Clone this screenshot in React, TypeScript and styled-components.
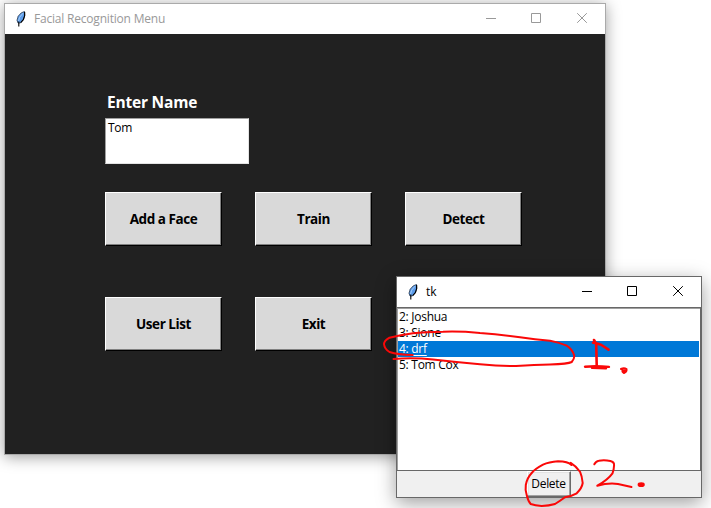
import React from "react";
import styled, { createGlobalStyle } from "styled-components";

const Global = createGlobalStyle`
  * { box-sizing: border-box; }
  html, body { margin: 0; padding: 0; background: #fff; overflow: hidden; }
`;

const Desktop = styled.main`
  position: relative;
  width: 711px;
  height: 508px;
  overflow: hidden;
  background: #fff;
  font-family: "Open Sans", "Noto Sans", sans-serif;
  font-size: 12px;
  line-height: 16px;
  color: #000;
`;

const WindowFrame = styled.section<{ $x: number; $y: number; $w: number; $h: number; $active?: boolean }>`
  position: absolute;
  left: ${(p) => p.$x}px;
  top: ${(p) => p.$y}px;
  width: ${(p) => p.$w}px;
  height: ${(p) => p.$h}px;
  display: flex;
  flex-direction: column;
  border: 1px solid ${(p) => (p.$active ? "#686868" : "#aaa")};
  box-shadow: ${(p) => (p.$active ? "0 5px 18px rgba(0,0,0,.38)" : "0 2px 14px rgba(0,0,0,.38)")};
  background: #fff;
`;

const TitleBar = styled.header<{ $active?: boolean }>`
  flex: 0 0 30px;
  display: flex;
  align-items: center;
  padding-left: 10px;
  color: ${(p) => (p.$active ? "#000" : "#999")};
`;

const Title = styled.span<{ $spacing: number }>`
  flex: 1;
  margin-left: 7px;
  letter-spacing: ${(p) => p.$spacing}px;
  white-space: nowrap;
`;

const Controls = styled.div`
  display: flex;
`;

const Control = styled.svg`
  width: 45px;
  height: 30px;
  fill: none;
  stroke: currentColor;

  &:last-child { width: 47px; }
`;

const Client = styled.div`
  flex: 1;
  display: flex;
  flex-direction: column;
  padding: 58px 0 0 100px;
  background: #212121;
`;

const FieldLabel = styled.label`
  height: 26px;
  padding-left: 2px;
  font-size: 15.5px;
  font-weight: 700;
  line-height: 20px;
  letter-spacing: -0.2px;
  color: #fff;
`;

const NameField = styled.div`
  width: 144px;
  height: 46px;
  padding: 1px 1px 1px 2px;
  border: 1px solid;
  border-color: #a0a0a0 #e3e3e3 #e3e3e3 #a0a0a0;
  background: #fff;
  letter-spacing: -0.3px;
`;

const ButtonGrid = styled.div`
  display: grid;
  grid-template-columns: repeat(3, 117px);
  grid-auto-rows: 54px;
  gap: 51px 33px;
  margin-top: 28px;
`;

const FaceButton = styled.button`
  padding: 0 0 1px;
  border: 1px solid;
  border-color: #fff #000 #000 #fff;
  box-shadow: inset -1px -1px #808080;
  background: #d9d9d9;
  font: 700 13.5px/18px "Open Sans", "Noto Sans", sans-serif;
  letter-spacing: -0.45px;
  color: #000;
`;

const ListBox = styled.ul`
  flex: 0 0 164px;
  margin: 0;
  padding: 1px 1px 0 0;
  list-style: none;
  border: 1px solid #686868;
  border-width: 1px 1px 1px 0;
  box-shadow: inset 1px 1px #a0a0a0;
  background: #fff;
`;

const ListItem = styled.li<{ $selected?: boolean }>`
  height: 16px;
  margin-left: 1px;
  padding-left: 1px;
  line-height: 16px;
  letter-spacing: -0.28px;
  color: ${(p) => (p.$selected ? "#fff" : "#000")};
  background: ${(p) => (p.$selected ? "#0078d7" : "transparent")};
  span { text-decoration: ${(p) => (p.$selected ? "underline" : "none")}; text-underline-offset: 2px; }
`;

const Footer = styled.footer`
  flex: 1;
  display: flex;
  justify-content: center;
  padding-right: 1px;
  background: #f0f0f0;
`;

const DeleteButton = styled.button`
  width: 44px;
  height: 26px;
  padding: 0;
  border: 1px solid;
  border-color: #fff #696969 #696969 #fff;
  box-shadow: inset -1px -1px #a0a0a0, inset 1px 1px #e3e3e3;
  background: #f0f0f0;
  font: 12px/16px "Open Sans", "Noto Sans", sans-serif;
  letter-spacing: -0.3px;
  color: #000;
`;

const Ink = styled.svg`
  position: absolute;
  inset: 0;
  fill: none;
  stroke: #fa0808;
  stroke-width: 2;
  stroke-linecap: round;
  stroke-linejoin: round;
  pointer-events: none;
`;

const Feather = () => (
  <svg width="12" height="16" viewBox="0 0 12 16">
    <path d="M9.5.5 6.2 1.9 3.2 5.2 2 9.2l1 2.8h2.4L8.5 8.6l1.3-4.4Z" fill="#5c9cea" stroke="#26364d" strokeWidth=".8" />
    <path d="M9.6 1v4L8.3 8.7 5.7 11.6M3.8 10.5v5" fill="none" stroke="#000" strokeWidth="1.1" />
    <path d="M7.9 2.3 4.7 6.2 3.5 10" fill="none" stroke="#aed4fb" strokeWidth=".9" />
  </svg>
);

const WindowControls = () => (
  <Controls>
    <Control viewBox="0 0 45 30"><path d="M18 14.5h10" /></Control>
    <Control viewBox="0 0 45 30"><path d="M18.5 9.5h9v9h-9z" /></Control>
    <Control viewBox="0 0 47 30"><path d="m19.2 9.2 9.6 9.6m0-9.6-9.6 9.6" /></Control>
  </Controls>
);

const users = [
  { id: 2, name: "Joshua" },
  { id: 3, name: "Sione" },
  { id: 4, name: "drf" },
  { id: 5, name: "Tom Cox" },
];

export default function App() {
  return (
    <Desktop>
      <Global />
      <WindowFrame $x={4} $y={3} $w={602} $h={452}>
        <TitleBar><Feather /><Title $spacing={-0.2}>Facial Recognition Menu</Title><WindowControls /></TitleBar>
        <Client>
          <FieldLabel>Enter Name</FieldLabel>
          <NameField>Tom</NameField>
          <ButtonGrid>
            {["Add a Face", "Train", "Detect", "User List", "Exit"].map((label) => (
              <FaceButton key={label}>{label}</FaceButton>
            ))}
          </ButtonGrid>
        </Client>
      </WindowFrame>
      <WindowFrame $x={396} $y={276} $w={306} $h={222} $active>
        <TitleBar $active><Feather /><Title $spacing={-0.1}>tk</Title><WindowControls /></TitleBar>
        <ListBox>
          {users.map((u) => (
            <ListItem key={u.id} $selected={u.id === 4}>{u.id}: <span>{u.name}</span></ListItem>
          ))}
        </ListBox>
        <Footer><DeleteButton>Delete</DeleteButton></Footer>
      </WindowFrame>
      <Ink width="711" height="508" viewBox="0 0 711 508">
        <path d="M393.5 358.9 Q414 357.5 433 359.5 Q455 362 480 364.3 Q500 366.5 516 366 Q535 364.8 550 364.4 Q568 364 571.7 362 Q575 358 574 355 Q572 349 566.7 345.7 Q558 342 550 340.7 Q535 339.5 520 337.3 Q500 334.5 480 333 Q460 331 443 331.7 Q425 332 413 333.3 Q400 335 389.5 337.7 Q384 341 384 344 Q384.5 349 389.5 352 Q398 354.8 412.7 355" />
        <path d="m594 340 2.2 4 .5 21M593 342.8q6.700 1 10 3.200l5.500 3.700" strokeWidth="2.6" />
        <path d="M585 366.7q11-1 24 .2M592 367.900l14 .3" strokeWidth="2.4" />
        <path d="M621 369q3-1.500 5.500 0 .5 3-2.500 4-2-1-1.500-3l3 1" />
        <path d="M594.3 464.3q1.700-3.300 4.500-3.600 6-.8 11.500.3 4 1 3.800 4-.2 5-1.600 8.300-4.500 6.300-15.200 12.400 11-3 20.700-1.700l13.500 3" />
        <ellipse cx="641.200" cy="484.700" rx="2.600" ry="1.400" fill="#fa0808" />
        <path d="M571.500 465Q568 461.500 558 461.300 549 462 543 464.700 535 469 531.700 473 527 478 525.800 485 525 490 526.700 495 528 501 530.700 504 535 505.500 541.700 506 549 505.800 555 504 560 501 565 497.300 572 496 576.700 493.300 582 488 582.700 483 582 476 580 471.700 576 466 570.700 462.800" />
      </Ink>
    </Desktop>
  );
}
